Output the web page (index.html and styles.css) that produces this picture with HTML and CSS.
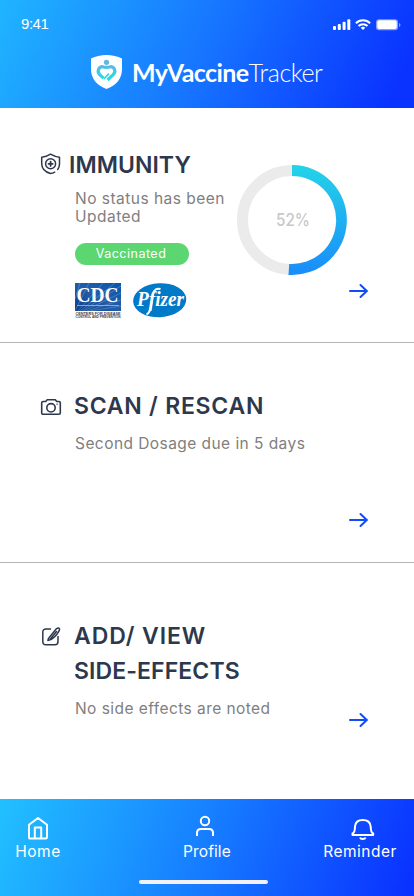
FILE: index.html
```
<!DOCTYPE html>
<html lang="en">
<head>
<meta charset="utf-8">
<title>MyVaccineTracker</title>
<link rel="stylesheet" href="styles.css">
</head>
<body>
<div class="app">
  <header class="top">
    <div class="status">
      <span class="time">9:41</span>
      <svg class="signals" width="68" height="14" viewBox="0 0 68 14" fill="#fff">
        <rect x="0" y="8" width="3" height="4" rx="1"/><rect x="4.8" y="6" width="3" height="6" rx="1"/><rect x="9.6" y="3.7" width="3" height="8.3" rx="1"/><rect x="14.3" y="1.3" width="3" height="10.7" rx="1"/>
        <g fill="none" stroke="#fff" stroke-width="2"><path d="M22.9 5.2a10.2 10.2 0 0 1 14.2 0"/><path d="M25.5 8a6.5 6.5 0 0 1 9 0"/></g>
        <path d="M27.7 9.7a3.6 3.6 0 0 1 4.6 0L30 12z"/>
        <rect x="43" y="1.200" width="22" height="11" rx="3" fill="#fff" fill-opacity=".5"/><rect x="44.3" y="2.300" width="19.400" height="8.800" rx="2"/><path d="M66 5v4c2-.8 2-3.2 0-4z" opacity=".5"/>
      </svg>
    </div>
    <div class="brand">
      <svg width="31" height="34" viewBox="0 0 31 34">
        <path d="M15.500 0Q24 0 31 3.500V14C31 24 25 30.500 15.500 34C6 30.500 0 24 0 14V3.500Q7 0 15.500 0z" fill="#fff"/>
        <circle cx="15.500" cy="7.300" r="2.600" fill="#5db9e8"/>
        <defs><linearGradient id="mark" gradientUnits="userSpaceOnUse" x1="0" y1="9" x2="0" y2="26"><stop offset="0" stop-color="#5bb8e6"/><stop offset="1" stop-color="#1fe0e4"/></linearGradient></defs>
        <path d="M12.500 23.200L8.900 19.800C5.300 16 8 11.700 11.500 11.700Q14 12.300 15.500 12.300Q17 12.300 19.500 11.700C23 11.700 25.700 16 22.200 19.600L16.600 25" fill="none" stroke="url(#mark)" stroke-width="3.200"/>
        <path d="M18 18.600L12.800 24" fill="none" stroke="url(#mark)" stroke-width="1.600"/>
      </svg>
      <h1 class="name"><b>MyVaccine</b><span>Tracker</span></h1>
    </div>
  </header>

  <main>
    <section class="card immunity">
      <svg class="icon" width="22" height="22" viewBox="0 0 22 22" fill="none" stroke="#2e384d" stroke-width="1.500" stroke-linecap="round" stroke-linejoin="round">
        <path d="M14.700 19.200Q12.800 20.500 10.500 20.500C4 18.700 1.700 15 1.700 10.500V4.300Q6.500 3.800 10.500 1.200Q15 3.800 19.500 4.300V11Q19.500 14 17.700 16.500"/><circle cx="10.600" cy="10.800" r="5"/><path d="M10.600 8.700v4.200M8.500 10.800h4.200" stroke-width="1.800"/>
      </svg>
      <div class="body">
        <h2>IMMUNITY</h2>
        <p class="note">No status has been<br>Updated</p>
        <span class="pill">Vaccinated</span>
        <div class="logos">
          <svg width="46" height="37" viewBox="0 0 46 37">
            <defs><linearGradient id="cdc" x1="0" y1="1" x2="1" y2="0"><stop offset="0" stop-color="#0a3f8c"/><stop offset=".5" stop-color="#235ca7"/><stop offset="1" stop-color="#0758ad"/></linearGradient></defs>
            <rect width="46" height="28" fill="url(#cdc)"/>
            <g stroke="#a9c5e6" stroke-width=".5" opacity=".65"><path d="M0 28L14 0M3 28L28 0M5 28L40 0M7 28L46 3M9 28L46 10M12 28L46 17M15 28L46 23M0 16L5 0"/></g>
            <text x="1.500" y="19" class="cdc" textLength="42" lengthAdjust="spacingAndGlyphs">CDC</text>
            <path d="M2 22.500h42" stroke="#9dbce0" stroke-width=".8"/>
            <text x=".5" y="31.700" class="cdc-small" textLength="45" lengthAdjust="spacingAndGlyphs">CENTERS FOR DISEASE</text>
            <text x=".5" y="35.300" class="cdc-small" textLength="45" lengthAdjust="spacingAndGlyphs">CONTROL AND PREVENTION</text>
          </svg>
          <svg width="54" height="36" viewBox="0 0 54 36">
            <ellipse cx="26.700" cy="17.200" rx="26.600" ry="17" fill="#0079c8" transform="rotate(-3 27 17.500)"/>
            <text x="4" y="23" class="pfizer" textLength="47" lengthAdjust="spacingAndGlyphs">Pfizer</text>
            <path d="M13.500 31.500Q17 30 18.200 22L20 11Q21.500 4.500 27.500 6" fill="none" stroke="#fff" stroke-width="2"/>
          </svg>
        </div>
      </div>
      <div class="side">
        <svg class="ring" width="110" height="110" viewBox="0 0 110 110">
          <defs><linearGradient id="arc" x1="0" y1="0" x2="0" y2="1"><stop offset="0" stop-color="#23d4e8"/><stop offset="1" stop-color="#198cfa"/></linearGradient></defs>
          <circle cx="55" cy="55" r="49.500" fill="none" stroke="#ebebeb" stroke-width="11"/>
          <path d="M55 0A55 55 0 1 1 51.500 109.900L52.200 98.900A44 44 0 1 0 55 11z" fill="url(#arc)"/>
          <text x="56" y="61" text-anchor="middle" class="percent" textLength="34" lengthAdjust="spacingAndGlyphs">52%</text>
        </svg>
        <svg class="arrow" width="20" height="16" viewBox="0 0 20 16"><path d="M1 8h17M11.500 2L17.800 8l-6.300 6"/></svg>
      </div>
    </section>

    <section class="card scan">
      <svg class="icon" width="22" height="22" viewBox="0 0 22 22" fill="none" stroke="#2e384d" stroke-width="1.600" stroke-linejoin="round">
        <path d="M2.500 18.200Q1.700 18.200 1.700 17V6.700Q1.700 5.500 3 5.500H5.700L7.200 3.800H15.300L16.700 5.500H19Q20.300 5.500 20.300 6.700V17Q20.300 18.200 19 18.200z"/><circle cx="11" cy="11.800" r="4.200"/><path d="M16.600 8.300h1"/>
      </svg>
      <div class="body">
        <h2>SCAN / RESCAN</h2>
        <p class="note">Second Dosage due in 5 days</p>
      </div>
      <svg class="arrow" width="20" height="16" viewBox="0 0 20 16"><path d="M1 8h17M11.500 2L17.800 8l-6.300 6"/></svg>
    </section>

    <section class="card effects">
      <svg class="icon" width="22" height="22" viewBox="0 0 22 22" fill="none" stroke="#2e384d" stroke-width="1.500" stroke-linecap="round" stroke-linejoin="round">
        <path d="M9.500 3H5Q1.800 3 1.800 6V15.500Q1.800 18.800 5 18.800H14Q17 18.800 17 15.500V10.500"/><path d="M15.600 2.600Q17.900 1 18.600 3.200Q18.200 6 13.700 10.800Q10.700 14 6.900 14.500Q7.100 12.600 8.200 11.400zM9 13.500L15.500 5.500"/>
      </svg>
      <div class="body">
        <h2><span class="l1">ADD/ VIEW</span><br><span class="l2">SIDE-EFFECTS</span></h2>
        <p class="note">No side effects are noted</p>
      </div>
      <svg class="arrow" width="20" height="16" viewBox="0 0 20 16"><path d="M1 8h17M11.500 2L17.800 8l-6.300 6"/></svg>
    </section>
  </main>

  <footer class="bottom">
    <nav>
      <a class="home"><svg width="24" height="26" viewBox="0 0 24 26"><path d="M3.500 23.500Q3 23.500 3 22V9.800L12 3L21 9.800V22Q21 23.500 19.500 23.500H4.500zM8.800 23V12.500H15.200V23"/></svg><span>Home</span></a>
      <a class="profile"><svg width="24" height="26" viewBox="0 0 24 26"><circle cx="12" cy="6" r="4.200"/><path d="M4 21V18Q4 14 8 14H16Q20 14 20 18V21"/></svg><span>Profile</span></a>
      <a class="reminder"><svg width="26" height="26" viewBox="0 0 26 26"><path d="M2.500 20V18.500Q5 17.500 5 11.500Q5.500 5 12.800 5Q20.100 5 20.700 11.500Q20.700 17.500 23.200 18.500V20zM10 22.500Q10.500 24 12.800 24Q15.100 24 15.500 22.500"/></svg><span>Reminder</span></a>
    </nav>
    <div class="bar"></div>
  </footer>
</div>
</body>
</html>
```
FILE: styles.css
```
* { box-sizing: border-box; margin: 0; padding: 0; }
body { width: 414px; height: 896px; overflow: hidden; background: #fff; font-family: Inter, "Liberation Sans", sans-serif; }
svg { display: block; flex: none; overflow: visible; }
.app { display: flex; flex-direction: column; height: 896px; }
.top { height: 108px; background: linear-gradient(115deg, #20b5ff 0%, #1778ff 47%, #0a33ff 94%); color: #fff; }
.status { display: flex; justify-content: space-between; align-items: flex-start; height: 54px; padding: 16px 12px 0 21px; }
.time { font: 15px/15px "Liberation Sans", sans-serif; letter-spacing: -.45px; }
.signals { margin: 2px 1px 0 0; }
.brand { display: flex; align-items: flex-start; padding: 1px 0 0 91px; gap: 10px; }
.name { font: 25px/34px Lato, sans-serif; white-space: nowrap; }
.name b { font-weight: 700; letter-spacing: -.6px; }
.name span { font-weight: 300; letter-spacing: -.4px; }
.card { display: flex; align-items: flex-start; padding-left: 40px; border-bottom: 1px solid #b5b5b5; }
.card .body { flex: none; }
h2 { color: #2e384d; font-size: 23px; line-height: 35px; font-weight: 600; white-space: nowrap; }
.note { color: #808080; font-size: 15.5px; line-height: 18px; white-space: nowrap; letter-spacing: .44px; }
.immunity { height: 235px; }
.immunity .icon { margin-top: 45px; }
.immunity .body { width: 175px; padding: 40px 0 0 7px; }
.immunity h2 { letter-spacing: .05px; }
.immunity .note, .pill, .logos { margin-left: 6px; }
.immunity .note { margin-top: 7px; letter-spacing: .48px; }
.pill { display: block; width: 114px; height: 22px; margin-top: 17px; border-radius: 11px; background: #5cd670; color: #fff; font-size: 12.5px; line-height: 22px; text-align: center; letter-spacing: .5px; padding-right: 2px; }
.logos { display: flex; gap: 12px; margin-top: 18px; }
.cdc { font: 700 22px "Liberation Serif", serif; fill: #fff; }
.cdc-small { font: 700 3.3px "Liberation Sans", sans-serif; fill: #35394d; }
.pfizer { font: italic 700 21px "Liberation Serif", serif; fill: #fff; }
.side { display: flex; flex-direction: column; padding-top: 57px; }
.percent { font-size: 17px; font-weight: 500; fill: #c8c8c8; }
.side .arrow { margin: 8px 0 0 112px; }
.arrow { fill: none; stroke: #104df8; stroke-width: 2; stroke-linecap: round; stroke-linejoin: round; }
.scan { height: 220px; }
.scan h2 { letter-spacing: .76px; }
.scan .icon { margin-top: 53px; }
.scan .body, .effects .body { width: 287px; padding-left: 12px; }
.scan .body { padding-top: 46px; }
.scan .note, .effects .note { margin: 11px 0 0 1px; }
.scan .arrow { margin-top: 169px; }
.effects { height: 236px; border-bottom: 0; }
.effects .l1 { letter-spacing: .9px; }
.effects .l2 { letter-spacing: .1px; }
.effects .icon { margin: 63px -1px 0 1px; }
.effects .body { padding-top: 56px; }
.effects .arrow { margin-top: 149px; }
.bottom { height: 97px; padding-top: 16px; background: linear-gradient(111deg, #22c0ff 0%, #1781ff 47%, #0a30ff 99%); color: #fff; }
nav { display: flex; padding-left: 15px; height: 65px; }
nav a { display: flex; flex-direction: column; align-items: center; font-size: 15.5px; letter-spacing: .5px; white-space: nowrap; }
nav .home { width: 46px; }
nav .profile { width: 48px; margin-left: 122px; letter-spacing: .1px; }
nav .reminder { width: 76px; margin-left: 91px; }
.reminder svg { margin-left: 5px; }
.profile svg { margin-right: 4px; }
nav span { line-height: 22px; }
nav svg { fill: none; stroke: #fff; stroke-width: 2; stroke-linejoin: round; }
.bar { width: 129px; height: 4px; margin: 0 0 0 139px; border-radius: 2px; background: #f3f0f8; }
```
